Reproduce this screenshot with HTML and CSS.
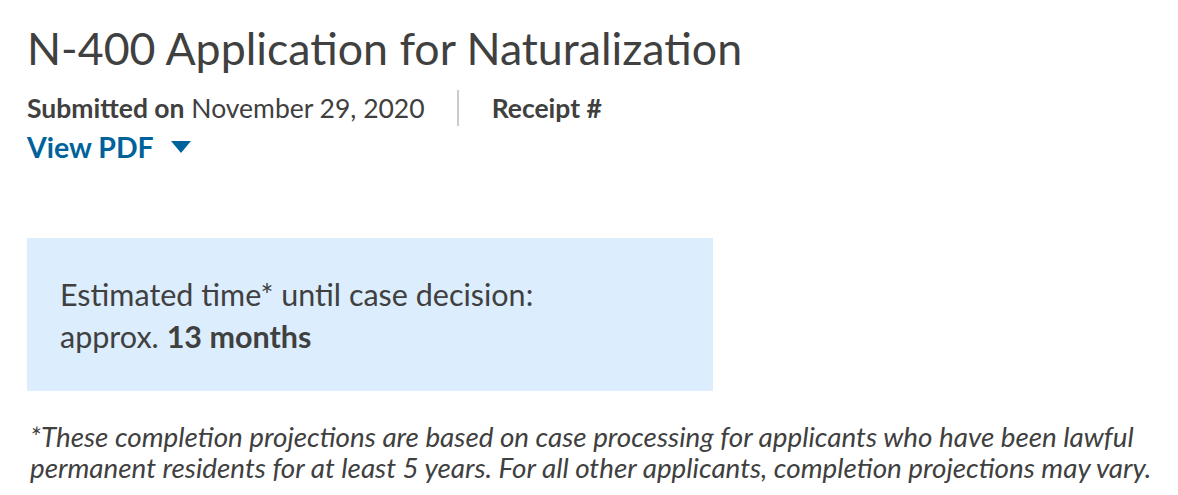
FILE: index.html
```html
<!DOCTYPE html>
<html lang="en">
<head>
    <meta charset="UTF-8">
    <meta name="viewport" content="width=device-width, initial-scale=1.0">
    <title>Case Status</title>
    <link rel="stylesheet" href="styles.css">
</head>
<body>

    <div class="case">
        <h1 class="case-title">N-400 Application for Naturalization</h1>
        <div class="case-meta">
            <div class="meta-item"><b>Submitted on</b> November 29, 2020</div>
            <div class="meta-divider"></div>
            <div class="meta-item"><b>Receipt #</b></div>
        </div>
        <a class="pdf-link" href="#">View PDF <span class="caret"></span></a>

        <div class="estimate">
            Estimated time* until case decision:<br>
            approx. <b>13 months</b>
        </div>

        <p class="footnote">*These completion projections are based on case processing for applicants who have been lawful<br>
            permanent residents for at least 5 years. For all other applicants, completion projections may vary.</p>
    </div>

</body>
</html>
```

FILE: styles.css
```css
body {
    margin: 0;
    background: #fff;
    color: #404040;
    font-family: Lato, "Open Sans", sans-serif;
}
.case {
    padding: 22px 0 0 27px;
    width: 1140px;
}
.case-title {
    margin: 0;
    font-size: 44.7px;
    font-weight: 400;
    line-height: 52px;
}
.case-meta {
    display: flex;
    align-items: center;
    margin-top: 16px;
    font-size: 26.5px;
}
.meta-item b {
    font-weight: 700;
}
.meta-divider {
    width: 2px;
    height: 36px;
    background: #ccc;
    margin: 0 33px 0 32px;
}
.pdf-link {
    display: inline-flex;
    align-items: center;
    margin-top: 4px;
    color: #00629b;
    font-size: 28.5px;
    font-weight: 700;
    text-decoration: none;
}
.caret {
    width: 0;
    height: 0;
    margin-left: 17px;
    border-left: 10px solid transparent;
    border-right: 10px solid transparent;
    border-top: 12px solid #00629b;
}
.estimate {
    margin-top: 74px;
    width: 686px;
    box-sizing: border-box;
    padding: 35px 33px 34px;
    background: #dcedfd;
    font-size: 30.5px;
    line-height: 42px;
}
.footnote {
    margin: 30px 0 0 3px;
    font-size: 27.8px;
    font-style: italic;
    line-height: 31px;
    white-space: nowrap;
}
```
